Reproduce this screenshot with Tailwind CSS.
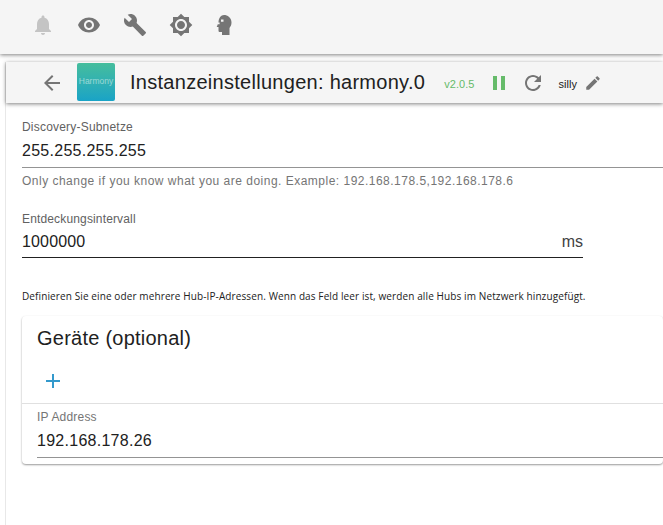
<!DOCTYPE html>
<html lang="de">
<head>
  <meta charset="UTF-8" />
  <title>Instanzeinstellungen: harmony.0</title>
  <script src="https://cdn.jsdelivr.net/npm/@tailwindcss/browser@4"></script>
</head>
<body class="bg-white h-[525px] overflow-hidden font-['Liberation_Sans',sans-serif] text-[#212121]">
  <!-- obere Leiste -->
  <header class="h-[54px] bg-[#f5f5f5] shadow-[0_1px_4px_rgba(0,0,0,0.5)] flex items-center pl-[31px] pb-1 relative z-10">
    <svg class="w-6 h-6 fill-[#c4c4c4]" viewBox="0 0 24 24"><path d="M12 22c1.1 0 2-.9 2-2h-4c0 1.1.9 2 2 2zm6-6v-5c0-3.07-1.63-5.64-4.5-6.32V4c0-.83-.67-1.5-1.5-1.5s-1.5.67-1.5 1.5v.68C7.64 5.36 6 7.92 6 11v5l-2 2v1h16v-1l-2-2z"/></svg>
    <svg class="w-6 h-6 ml-[22px] fill-[#757575]" viewBox="0 0 24 24"><path d="M12 4.5C7 4.5 2.73 7.61 1 12c1.73 4.39 6 7.5 11 7.5s9.27-3.11 11-7.5c-1.73-4.39-6-7.5-11-7.5zM12 17c-2.76 0-5-2.24-5-5s2.24-5 5-5 5 2.24 5 5-2.24 5-5 5zm0-8c-1.66 0-3 1.34-3 3s1.34 3 3 3 3-1.34 3-3-1.34-3-3-3z"/></svg>
    <svg class="w-6 h-6 ml-[22px] fill-[#757575]" viewBox="0 0 24 24"><path d="M22.7 19l-9.1-9.1c.9-2.3.4-5-1.5-6.9-2-2-5-2.4-7.4-1.3L9 6 6 9 1.6 4.7C.4 7.1.9 10.1 2.9 12.1c1.9 1.9 4.6 2.4 6.9 1.5l9.1 9.1c.4.4 1 .4 1.4 0l2.3-2.3c.5-.4.5-1.1.1-1.4z"/></svg>
    <svg class="w-6 h-6 ml-[22px] fill-[#757575]" viewBox="0 0 24 24"><path d="M20 8.69V4h-4.69L12 .69 8.69 4H4v4.69L.69 12 4 15.31V20h4.69L12 23.31 15.31 20H20v-4.69L23.31 12 20 8.69zM12 18c-3.31 0-6-2.69-6-6s2.69-6 6-6 6 2.69 6 6-2.69 6-6 6zm0-10c-2.21 0-4 1.79-4 4s1.79 4 4 4 4-1.79 4-4-1.79-4-4-4z"/></svg>
    <svg class="w-6 h-6 ml-[20px] fill-[#757575]" viewBox="0 0 24 24"><path d="M11 2C14.5 2 18.5 4.5 18.5 9.5C18.5 12 17.5 13.5 16.5 15V22H9V19H7C6 19 5.5 18.5 5.5 17.5V14H3.7L5.5 9.5C5.5 5 8 2 11 2Z"/><path class="fill-[#f5f5f5]" d="M8 6.5h2.5v2.2H8zM4.8 9.6h1.8v1.6H4.8z"/></svg>
  </header>

  <div class="ml-[5px] mt-2 border-l border-[#e8e8e8] h-[463px]">
    <!-- Titelzeile -->
    <div class="h-[41px] bg-[#f5f5f5] shadow-[0_1px_4px_rgba(0,0,0,0.5)] flex items-center pl-[34px]">
      <svg class="w-6 h-6 fill-[#757575]" viewBox="0 0 24 24"><path d="M20 11H7.83l5.59-5.59L12 4l-8 8 8 8 1.41-1.41L7.83 13H20v-2z"/></svg>
      <div class="w-[38px] h-[38px] ml-[13px] -mt-[2px] rounded-[2px] bg-gradient-to-b from-[#45bd9c] to-[#19a3c6] flex items-center justify-center text-[8.5px] text-white/50">Harmony</div>
      <h1 class="ml-[15px] mb-[2px] text-[20px] tracking-[0.28px] whitespace-nowrap">Instanzeinstellungen: harmony.0</h1>
      <span class="ml-[19px] mt-[3px] text-[11px] tracking-[0.07px] text-[#66bb6a]">v2.0.5</span>
      <svg class="w-6 h-6 ml-[12px] fill-[#66bb6a]" viewBox="0 0 24 24"><path d="M6 19h4V5H6v14zm8-14v14h4V5h-4z"/></svg>
      <svg class="w-6 h-6 ml-[10px] fill-[#757575]" viewBox="0 0 24 24"><path d="M17.65 6.35C16.2 4.9 14.21 4 12 4c-4.42 0-7.99 3.58-7.99 8s3.57 8 7.99 8c3.73 0 6.84-2.55 7.73-6h-2.08c-.82 2.33-3.04 4-5.65 4-3.31 0-6-2.69-6-6s2.69-6 6-6c1.66 0 3.14.69 4.22 1.78L13 11h7V4l-2.35 2.35z"/></svg>
      <span class="ml-[14px] mt-[3px] text-[11px]">silly</span>
      <svg class="w-[18px] h-[18px] ml-[7px] fill-[#757575]" viewBox="0 0 24 24"><path d="M3 17.25V21h3.75L17.81 9.94l-3.75-3.75L3 17.25zM20.71 7.04c.39-.39.39-1.02 0-1.41l-2.34-2.34c-.39-.39-1.02-.39-1.41 0l-1.83 1.83 3.75 3.75 1.83-1.83z"/></svg>
    </div>

    <!-- Formular -->
    <div class="pl-[16px]">
      <label class="block mt-[16px] text-[12px] leading-[16px] tracking-[0.2px] text-[#616161]">Discovery-Subnetze</label>
      <div class="h-[33px] border-b border-[#949494] text-[16px] leading-[32px] tracking-[0.27px] -mr-px">255.255.255.255</div>
      <p class="mt-[5px] text-[12px] leading-[16px] tracking-[0.49px] text-[#757575] whitespace-nowrap">Only change if you know what you are doing. Example: 192.168.178.5,192.168.178.6</p>

      <label class="block mt-[22px] text-[12px] leading-[16px] tracking-[0.15px] text-[#616161]">Entdeckungsintervall</label>
      <div class="w-[561px] h-[31px] border-b border-[#212121] text-[16px] leading-[29px] flex justify-between">
        <span class="tracking-[0.15px]">1000000</span><span class="text-[#424242]">ms</span>
      </div>

      <p class="mt-[31px] text-[10px] leading-[14px] tracking-[0.11px] font-['Open_Sans',sans-serif] whitespace-nowrap">Definieren Sie eine oder mehrere Hub-IP-Adressen. Wenn das Feld leer ist, werden alle Hubs im Netzwerk hinzugefügt.</p>

      <!-- Karte -->
      <section class="mt-[13px] h-[148px] rounded-[4px] bg-white shadow-[0_1px_2px_rgba(0,0,0,0.4)]">
        <h2 class="pl-[15px] pt-[8px] text-[20px] leading-[28px] tracking-[0.24px]">Geräte (optional)</h2>
        <div class="h-[31px] mt-[13px] pl-[19px] flex items-center">
          <svg class="w-[24px] h-[24px] fill-[#3399cc]" viewBox="0 0 24 24"><path d="M19 13h-6v6h-2v-6H5v-2h6V5h2v6h6v2z"/></svg>
        </div>
        <div class="mt-[7px] border-t border-[#e0e0e0] pl-[15px]">
          <div class="pt-[5px] text-[12px] leading-[16px] tracking-[0.2px] text-[#757575]">IP Address</div>
          <div class="h-[33px] border-b border-[#949494] text-[16px] leading-[31px] tracking-[0.27px]">192.168.178.26</div>
        </div>
      </section>
    </div>
  </div>
</body>
</html>
